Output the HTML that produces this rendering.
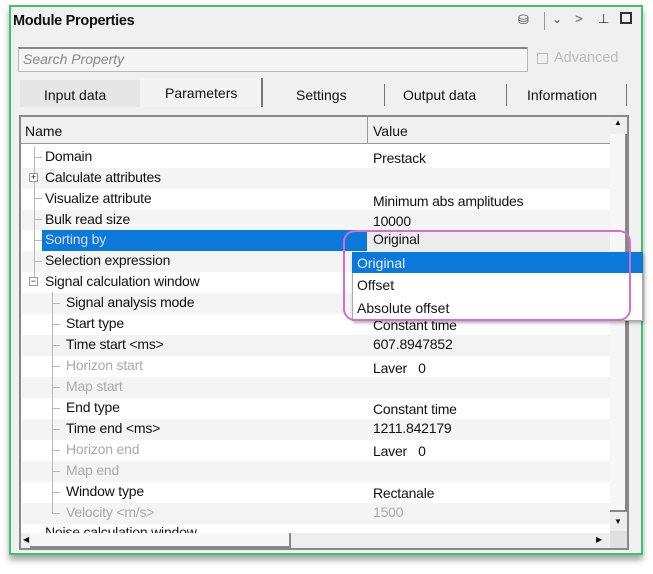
<!DOCTYPE html>
<html><head><style>
*{margin:0;padding:0;box-sizing:border-box}
body{width:653px;height:574px;background:#fff;font-family:"Liberation Sans",sans-serif;position:relative;overflow:hidden;font-size:14px;color:#111}
.a{position:absolute}
.frame{left:9px;top:5px;width:634px;height:550px;border:2px solid #3cc46a;background:#f0f0f0;box-shadow:0 5px 6px rgba(0,0,0,.35)}
.row{position:absolute;left:22px;width:588px;height:21px}
.n{position:absolute;top:1px;white-space:nowrap;letter-spacing:-0.2px}
.v{position:absolute;left:351px;top:3px;white-space:nowrap;letter-spacing:-0.2px}
.g{color:#aaa}
.ln{position:absolute;border-left:1px solid #b8b8b8}
.hl{position:absolute;border-top:1px solid #b8b8b8;width:8px}
</style></head><body>
<div class="a frame"></div>
<div class="a" style="left:13px;top:13px;font-weight:bold;font-size:14.5px;letter-spacing:-0.3px">Module Properties</div>
<div class="a" style="left:518px;top:12px;font-size:13px;color:#444">⛁</div>
<div class="a" style="left:544px;top:12px;width:1px;height:18px;background:#999"></div>
<div class="a" style="left:552px;top:12px;font-size:12px;color:#555">⌄</div>
<div class="a" style="left:575px;top:11px;font-size:13px;color:#555">&gt;</div>
<div class="a" style="left:598px;top:11px;font-size:13px;color:#333">⊥</div>
<div class="a" style="left:620px;top:12px;width:12px;height:12px;border:2px solid #333"></div>
<div class="a" style="left:18px;top:47px;width:510px;height:25px;border:1px solid #b8b8b8;border-top:2px solid #888;background:#f5f5f5"></div>
<div class="a" style="left:23px;top:51px;font-style:italic;color:#888;font-size:14px">Search Property</div>
<div class="a" style="left:537px;top:53px;width:11px;height:11px;border:1px solid #bbb"></div>
<div class="a" style="left:554px;top:50px;color:#bbb;font-size:14.5px">Advanced</div>
<div class="a" style="left:20px;top:80px;width:120px;height:27px;background:#e6e6e6"></div>
<div class="a" style="left:44px;top:87px">Input data</div>
<div class="a" style="left:140px;top:78px;width:123px;height:29px;background:#f3f3f3;border-right:2px solid #777"></div>
<div class="a" style="left:165px;top:85px">Parameters</div>
<div class="a" style="left:296px;top:87px">Settings</div>
<div class="a" style="left:384px;top:84px;width:1px;height:22px;background:#777"></div>
<div class="a" style="left:403px;top:87px">Output data</div>
<div class="a" style="left:506px;top:84px;width:1px;height:22px;background:#777"></div>
<div class="a" style="left:527px;top:87px">Information</div>
<div class="a" style="left:626px;top:84px;width:1px;height:22px;background:#777"></div>
<div class="a" style="left:19px;top:115px;width:610px;height:435px;border:2px solid #888;background:#fff"></div>
<div class="a" style="left:21px;top:117px;width:589px;height:27px;background:#f0f0f0;border-bottom:1px solid #999"></div>
<div class="a" style="left:367px;top:117px;width:1px;height:27px;background:#999"></div>
<div class="a" style="left:25px;top:123px">Name</div>
<div class="a" style="left:373px;top:123px">Value</div>
<div class="a" style="left:610px;top:117px;width:17px;height:414px;background:#eee"></div>
<div class="a" style="left:610px;top:134px;width:17px;height:378px;background:#f7f7f7;border-right:2px solid #888;border-bottom:2px solid #888"></div>
<div class="a" style="left:614px;top:118px;font-size:8px">▲</div>
<div class="a" style="left:614px;top:517px;font-size:8px">▼</div>
<div class="row" style="top:147px;background:#fff"><span class="n" style="left:23px">Domain</span><span class="v">Prestack</span></div>
<div class="row" style="top:168px;background:#f4f4f4"><span class="n" style="left:23px">Calculate attributes</span></div>
<div class="row" style="top:189px;background:#fff"><span class="n" style="left:23px">Visualize attribute</span><span class="v" style="top:4px">Minimum abs amplitudes</span></div>
<div class="row" style="top:210px;background:#f4f4f4"><span class="n" style="left:23px">Bulk read size</span><span class="v">10000</span></div>
<div class="row" style="top:230px;background:#fff"><div class="a" style="left:20px;top:0;width:325px;height:21px;background:#0a79d9"></div><span class="n" style="left:23px;color:#dde">Sorting by</span><div class="a" style="left:345px;top:0;width:243px;height:21px;background:#ececec"></div><span class="v" style="top:1px">Original</span></div>
<div class="row" style="top:251px;background:#f4f4f4"><span class="n" style="left:23px">Selection expression</span></div>
<div class="row" style="top:272px;background:#fff"><span class="n" style="left:23px">Signal calculation window</span></div>
<div class="row" style="top:293px;background:#f4f4f4"><span class="n" style="left:44px">Signal analysis mode</span></div>
<div class="row" style="top:314px;background:#fff"><span class="n" style="left:44px">Start type</span><span class="v">Constant time</span></div>
<div class="row" style="top:335px;background:#f4f4f4"><span class="n" style="left:44px">Time start &lt;ms&gt;</span><span class="v" style="top:1px">607.8947852</span></div>
<div class="row" style="top:356px;background:#fff"><span class="n g" style="left:44px">Horizon start</span><span class="v" style="top:4px">Laver &nbsp;&nbsp;0</span></div>
<div class="row" style="top:377px;background:#f4f4f4"><span class="n g" style="left:44px">Map start</span></div>
<div class="row" style="top:398px;background:#fff"><span class="n" style="left:44px">End type</span><span class="v">Constant time</span></div>
<div class="row" style="top:419px;background:#f4f4f4"><span class="n" style="left:44px">Time end &lt;ms&gt;</span><span class="v" style="top:1px">1211.842179</span></div>
<div class="row" style="top:440px;background:#fff"><span class="n g" style="left:44px">Horizon end</span><span class="v" style="top:3px">Laver &nbsp;&nbsp;0</span></div>
<div class="row" style="top:461px;background:#f4f4f4"><span class="n g" style="left:44px">Map end</span></div>
<div class="row" style="top:482px;background:#fff"><span class="n" style="left:44px">Window type</span><span class="v" style="top:3px">Rectanale</span></div>
<div class="row" style="top:503px;background:#f4f4f4"><span class="n g" style="left:44px">Velocity &lt;m/s&gt;</span><span class="v g" style="top:1px">1500</span></div>
<div class="row" style="top:524px;height:9px;background:#fff;overflow:hidden"><span class="n" style="left:23px;top:0">Noise calculation window</span></div>
<div class="ln" style="left:34px;top:147px;height:132px"></div>
<div class="hl" style="left:34px;top:157px"></div>
<div class="hl" style="left:34px;top:198px"></div>
<div class="hl" style="left:34px;top:219px"></div>
<div class="hl" style="left:34px;top:240px"></div>
<div class="hl" style="left:34px;top:261px"></div>
<div class="ln" style="left:52px;top:292px;height:222px"></div>
<div class="hl" style="left:52px;top:303px"></div><div class="hl" style="left:52px;top:324px"></div><div class="hl" style="left:52px;top:345px"></div><div class="hl" style="left:52px;top:366px"></div><div class="hl" style="left:52px;top:387px"></div><div class="hl" style="left:52px;top:408px"></div><div class="hl" style="left:52px;top:429px"></div><div class="hl" style="left:52px;top:450px"></div><div class="hl" style="left:52px;top:471px"></div><div class="hl" style="left:52px;top:492px"></div><div class="hl" style="left:52px;top:513px"></div>
<div class="a" style="left:29px;top:173px;width:9px;height:9px;border:1px solid #999;background:#fff;font-size:9px;line-height:7px;text-align:center">+</div>
<div class="a" style="left:29px;top:277px;width:9px;height:9px;border:1px solid #999;background:#fff;font-size:9px;line-height:7px;text-align:center">−</div>
<div class="a" style="left:21px;top:533px;width:589px;height:15px;background:#eee"></div>
<div class="a" style="left:30px;top:533px;width:261px;height:15px;background:#f7f7f7;border-right:2px solid #888;border-bottom:2px solid #888"></div>
<div class="a" style="left:23px;top:535px;font-size:8px">◀</div>
<div class="a" style="left:596px;top:535px;font-size:8px">▶</div>
<div class="a" style="left:610px;top:531px;width:17px;height:17px;background:#e0e0e0"></div>
<div class="a" style="left:352px;top:252px;width:291px;height:69px;background:#fff;border:1px solid #aaa;box-shadow:1px 2px 3px rgba(0,0,0,.3)"></div>
<div class="a" style="left:352px;top:252px;width:291px;height:21px;background:#0a79d9"></div>
<div class="a" style="left:357px;top:255px;color:#eef">Original</div>
<div class="a" style="left:357px;top:277px">Offset</div>
<div class="a" style="left:357px;top:300px">Absolute offset</div>
<div class="a" style="left:343px;top:230px;width:288px;height:91px;border:2px solid #d46fd0;border-radius:12px"></div>
</body></html>
